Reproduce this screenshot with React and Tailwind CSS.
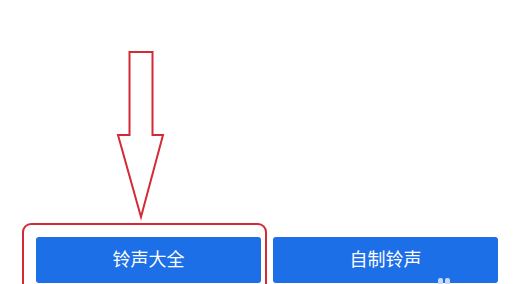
import React from "react";

export default function App() {
  return (
    <div
      className="relative w-[520px] h-[284px] overflow-hidden bg-white"
      style={{ fontFamily: '"Noto Sans CJK SC", "Noto Sans", sans-serif' }}
    >
      <div className="flex gap-[12px] pt-[237px] pl-[36px] pr-[22px]">
        <button className="w-[225px] h-[46px] rounded-[3px] bg-[#1c6fe6] text-white text-[18px] leading-none flex items-center justify-center pb-[4px]">
          铃声大全
        </button>
        <button className="relative w-[225px] h-[46px] rounded-[3px] bg-[#1c6fe6] text-white text-[18px] leading-none flex items-center justify-center pb-[4px]">
          自制铃声
          <span className="absolute left-[165px] top-[41px] flex gap-[2px]">
            <span className="w-[5px] h-[7px] rounded-[2px] bg-[#c9d8f2]" />
            <span className="w-[5px] h-[7px] rounded-[2px] bg-[#c9d8f2]" />
          </span>
        </button>
      </div>

      <svg
        className="absolute left-0 top-0"
        width="520"
        height="284"
        viewBox="0 0 520 284"
      >
        <polygon
          points="129.5,52 152.5,52 152.5,135 163,135 141,217 118,135 129.5,135"
          fill="white"
          stroke="#d42a35"
          strokeWidth="2"
          strokeLinejoin="miter"
        />
      </svg>

      <div className="absolute left-[22px] top-[223px] w-[245px] h-[90px] rounded-[9px] border-2 border-[#d42a35]" />
    </div>
  );
}
